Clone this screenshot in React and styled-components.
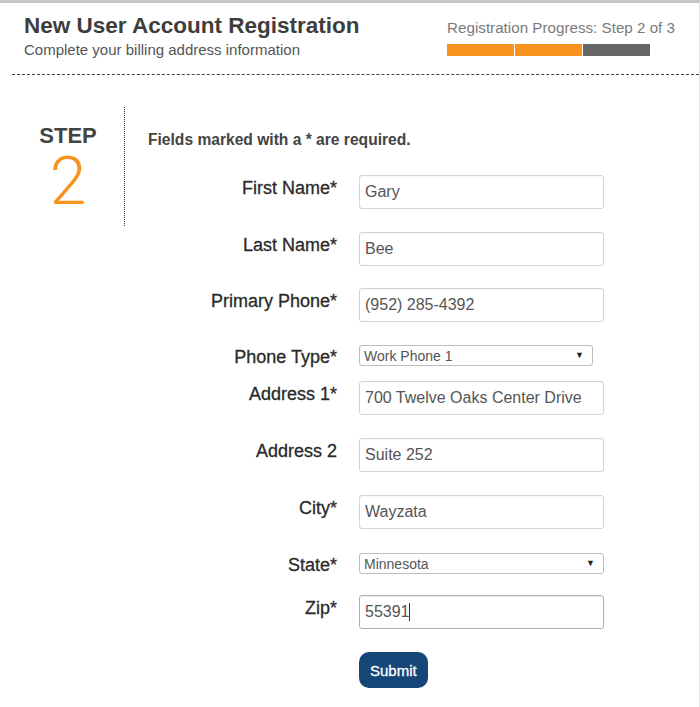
import React from 'react';
import styled, { createGlobalStyle } from 'styled-components';

const GlobalStyle = createGlobalStyle`
  body {
    margin: 0;
    background: #fff;
    font-family: "Liberation Sans", Arial, sans-serif;
  }
`;

const Frame = styled.div`
  min-height: 707px;
  box-sizing: border-box;
  border-top: 3px solid #c6c6c6;
  border-right: 1px solid #e2e2e2;
`;

const Header = styled.header`
  display: flex;
  justify-content: space-between;
  align-items: flex-start;
  margin-left: 12px;
  padding: 10px 24px 15px 12px;
  border-bottom: 1px dashed #444;
`;

const Title = styled.h1`
  margin: 0;
  font-size: 22.5px;
  line-height: 26px;
  font-weight: bold;
  color: #3d3d3d;
`;

const Subtitle = styled.p`
  margin: 2px 0 0;
  font-size: 15px;
  line-height: 18px;
  color: #555;
`;

const Progress = styled.div`
  padding-top: 6px;
`;

const ProgressLabel = styled.div`
  font-size: 15.2px;
  line-height: 18px;
  color: #7a7a7a;
`;

const ProgressBar = styled.div`
  display: flex;
  gap: 1px;
  margin-top: 7px;
`;

const Segment = styled.div`
  width: 67px;
  height: 12px;
  background: ${p => (p.done ? '#f7931e' : '#666')};
`;

const Main = styled.main`
  display: flex;
  align-items: flex-start;
  margin: 32px 0 0 12px;
`;

const StepColumn = styled.div`
  width: 112px;
  height: 102px;
  padding-top: 17px;
  border-right: 1px dotted #333;
  text-align: center;
`;

const StepWord = styled.div`
  font-size: 22px;
  line-height: 24px;
  font-weight: bold;
  color: #444;
`;

const StepNumber = styled.div`
  margin-top: 8px;
  font-family: Roboto, "Liberation Sans", sans-serif;
  font-weight: 300;
  font-size: 66px;
  line-height: 52px;
  color: #f7931e;
`;

const FormArea = styled.form`
  padding: 24px 0 0 23px;
`;

const Note = styled.p`
  margin: 0 0 26px;
  font-size: 15.6px;
  line-height: 18px;
  font-weight: bold;
  color: #444;
`;

const Row = styled.div`
  display: grid;
  grid-template-columns: 189px 245px;
  column-gap: 22px;
  align-items: start;
  margin-bottom: ${p => p.space}px;
`;

const Label = styled.label`
  padding-top: ${p => (p.tight ? 1 : 2)}px;
  font-size: 18px;
  line-height: 22px;
  color: #2a2a2a;
  text-align: right;
  -webkit-text-stroke: 0.3px #2a2a2a;
`;

const FieldBox = styled.div`
  position: relative;
`;

const Input = styled.input`
  display: block;
  width: 245px;
  height: 34px;
  box-sizing: border-box;
  padding: 0 5px;
  border: 1px solid ${p => (p.focused ? '#b0b0b0' : '#d4d4d4')};
  border-radius: 3px;
  box-shadow: inset 0 1px 1px rgba(0, 0, 0, ${p => (p.focused ? 0.08 : 0.03)});
  font-family: "Liberation Sans", Arial, sans-serif;
  font-size: 16px;
  color: #555;
  outline: none;
`;

const Caret = styled.span`
  position: absolute;
  left: 50px;
  top: 8px;
  width: 1px;
  height: 18px;
  background: #333;
`;

const SelectBox = styled.div`
  position: relative;
  width: ${p => p.width}px;

  &::after {
    content: '▼';
    position: absolute;
    right: 9px;
    top: 5px;
    font-size: 9px;
    line-height: 10px;
    color: #222;
    pointer-events: none;
  }
`;

const Select = styled.select`
  appearance: none;
  display: block;
  width: 100%;
  height: 21px;
  box-sizing: border-box;
  padding: 0 4px;
  border: 1px solid #bdbdbd;
  border-radius: 3px;
  background: #fff;
  font-family: "Liberation Sans", Arial, sans-serif;
  font-size: 14px;
  color: #555;
  outline: none;
`;

const SubmitButton = styled.button`
  height: 36px;
  padding: 0 11px;
  border: none;
  border-radius: 10px;
  background: #164578;
  color: #fff;
  font-family: "Liberation Sans", Arial, sans-serif;
  font-size: 15px;
  -webkit-text-stroke: 0.3px #fff;
  cursor: pointer;
`;

const TextRow = ({ label, value, focused, space = 23 }) => (
  <Row space={space}>
    <Label>{label}</Label>
    <FieldBox>
      <Input defaultValue={value} focused={focused} readOnly />
      {focused && <Caret />}
    </FieldBox>
  </Row>
);

const SelectRow = ({ label, value, width, space }) => (
  <Row space={space}>
    <Label tight>{label}</Label>
    <SelectBox width={width}>
      <Select defaultValue={value}>
        <option>{value}</option>
      </Select>
    </SelectBox>
  </Row>
);

const App = () => {
  return (
    <Frame>
      <GlobalStyle />
      <Header>
        <div>
          <Title>New User Account Registration</Title>
          <Subtitle>Complete your billing address information</Subtitle>
        </div>
        <Progress>
          <ProgressLabel>Registration Progress: Step 2 of 3</ProgressLabel>
          <ProgressBar>
            <Segment done />
            <Segment done />
            <Segment />
          </ProgressBar>
        </Progress>
      </Header>
      <Main>
        <StepColumn>
          <StepWord>STEP</StepWord>
          <StepNumber>2</StepNumber>
        </StepColumn>
        <FormArea onSubmit={e => e.preventDefault()}>
          <Note>Fields marked with a * are required.</Note>
          <TextRow label="First Name*" value="Gary" />
          <TextRow label="Last Name*" value="Bee" space={22} />
          <TextRow label="Primary Phone*" value="(952) 285-4392" />
          <SelectRow label="Phone Type*" value="Work Phone 1" width={234} space={13} />
          <TextRow label="Address 1*" value="700 Twelve Oaks Center Drive" />
          <TextRow label="Address 2" value="Suite 252" />
          <TextRow label="City*" value="Wayzata" space={24} />
          <SelectRow label="State*" value="Minnesota" width={245} space={19} />
          <TextRow label="Zip*" value="55391" focused />
          <Row space={0}>
            <span />
            <div>
              <SubmitButton type="submit">Submit</SubmitButton>
            </div>
          </Row>
        </FormArea>
      </Main>
    </Frame>
  );
};

export default App;
